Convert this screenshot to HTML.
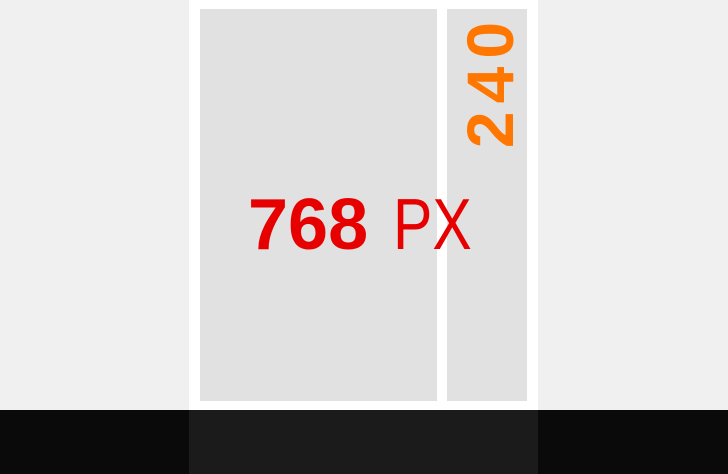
<!DOCTYPE html>
<html><head><style>
html,body{margin:0;padding:0}
body{width:728px;height:474px;position:relative;overflow:hidden;background:#f0f0f0;font-family:"Liberation Sans",sans-serif}
.d{position:absolute}
</style></head><body>
<div class="d" style="left:0;top:410px;width:728px;height:64px;background:#0a0a0a"></div>
<div class="d" style="left:189px;top:410px;width:349px;height:64px;background:#1b1b1b"></div>
<div class="d" style="left:189px;top:0;width:349px;height:410px;background:#fff"></div>
<div class="d" style="left:200px;top:9px;width:237px;height:392px;background:#e1e1e1"></div>
<div class="d" style="left:447px;top:9px;width:80px;height:392px;background:#e1e1e1"></div>
<div class="d" style="left:248px;top:183px;font-size:72px;line-height:84px;font-weight:bold;color:#e60000;letter-spacing:0px">768</div>
<div class="d" style="left:393px;top:183px;font-size:72px;line-height:84px;color:#e60000;transform:scaleX(0.82);transform-origin:left top">PX</div>
<div class="d" style="left:490px;top:85px;width:0;height:0">
<div style="position:absolute;left:-75px;top:-40px;width:150px;height:80px;line-height:80px;text-align:center;font-size:66px;font-weight:bold;color:#ff7700;letter-spacing:8px;text-indent:8px;transform:rotate(-90deg)">240</div>
</div>
</body></html>
